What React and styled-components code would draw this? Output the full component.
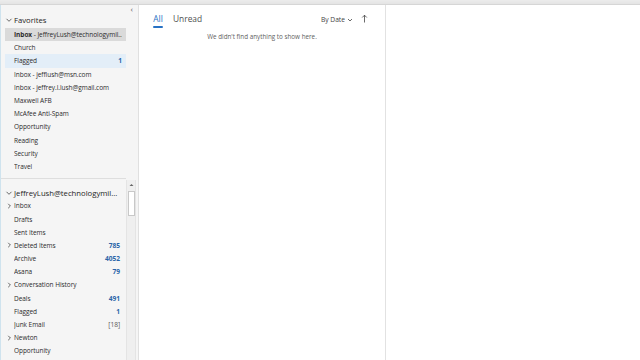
import React from "react";
import styled, { createGlobalStyle } from "styled-components";

const Global = createGlobalStyle`
  html, body { margin: 0; padding: 0; background: #ffffff; }
  body { font-family: "Open Sans", "Noto Sans", "Liberation Sans", sans-serif; color: #242424; }
  * { box-sizing: border-box; }
`;

const Shell = styled.div`
  width: 640px;
  height: 360px;
  display: flex;
  flex-direction: column;
  overflow: hidden;
  background: #fff;
`;

const TopBar = styled.div`
  height: 5px;
  flex: none;
  background: linear-gradient(#ececec, #e4e4e4);
  border-bottom: 1px solid #d6d6d6;
`;

const Main = styled.div`
  flex: 1;
  display: flex;
  min-height: 0;
`;

const Nav = styled.nav`
  width: 139px;
  flex: none;
  background: #f5f5f5;
  border-right: 1px solid #e0e0e0;
  border-left: 1px solid #cfe3ee;
  display: flex;
  flex-direction: column;
  min-height: 0;
`;

const CollapseRow = styled.div`
  height: 7px;
  display: flex;
  justify-content: flex-end;
  align-items: center;
  padding-right: 5px;
  font-size: 8px;
  color: #555;
  line-height: 1;
`;

const SectionHeader = styled.div`
  height: ${p => p.$h || 16}px;
  padding-top: ${p => p.$pt || 0}px;
  display: flex;
  align-items: center;
  padding-left: 4px;
  font-size: 7.7px;
  color: #242424;
  white-space: nowrap;
  gap: 1px;
`;

const Chevron = styled.svg`
  width: 8px;
  height: 8px;
  flex: none;
`;

const Row = styled.div`
  height: 13.2px;
  margin: 0 ${p => (p.$inScroll ? 2 : 12)}px 0 4px;
  display: flex;
  align-items: center;
  padding-left: ${p => (p.$expander ? 2 : 9)}px;
  padding-right: 4px;
  font-size: 6.5px;
  letter-spacing: -0.05px;
  color: #2b2b2b;
  white-space: nowrap;
  background: ${p => (p.$selected ? "#dadada" : p.$hover ? "#e3eef8" : "transparent")};
`;

const RowLabel = styled.span`
  flex: 1;
  overflow: hidden;
`;

const Strong = styled.b`
  font-weight: 700;
`;

const Count = styled.span`
  color: ${p => (p.$muted ? "#555" : "#2a64a8")};
  font-weight: ${p => (p.$muted ? 400 : 700)};
  font-size: 6.6px;
`;

const Divider = styled.div`
  height: 1px;
  background: #dedede;
  margin: 5px 12px 1px 0;
`;

const AccountArea = styled.div`
  flex: 1;
  display: flex;
  min-height: 0;
`;

const AccountList = styled.div`
  flex: 1;
  min-width: 0;
  overflow: hidden;
`;

const Scrollbar = styled.div`
  width: 10px;
  flex: none;
  margin-right: 2px;
  background: #efefef;
  border-left: 1px solid #e4e4e4;
  border-right: 1px solid #e4e4e4;
  display: flex;
  flex-direction: column;
  align-items: center;
  padding-top: 2px;
  gap: 3px;
`;

const ScrollArrow = styled.svg`
  width: 7px;
  height: 6px;
`;

const Thumb = styled.div`
  width: 7px;
  height: 25px;
  background: #ffffff;
  border: 1px solid #c8c8c8;
`;

const Expander = styled.span`
  width: 7px;
  flex: none;
  display: flex;
  align-items: center;
`;

const ListPane = styled.section`
  width: 247px;
  flex: none;
  background: #fff;
  border-right: 1px solid #e2e2e2;
  display: flex;
  flex-direction: column;
`;

const TabBar = styled.div`
  height: 23px;
  display: flex;
  align-items: flex-start;
  padding: 8px 17px 0 14px;
`;

const Tab = styled.div`
  font-size: 8.4px;
  color: ${p => (p.$active ? "#2872c4" : "#505050")};
  margin-right: 10px;
  display: flex;
  flex-direction: column;
  align-items: center;
  gap: 2px;
  &::after {
    content: "";
    width: 10px;
    height: 1.5px;
    background: ${p => (p.$active ? "#2872c4" : "transparent")};
    border-radius: 1px;
  }
`;

const Spacer = styled.div`
  flex: 1;
`;

const SortButton = styled.div`
  font-size: 6.7px;
  color: #444;
  display: flex;
  align-items: center;
  gap: 2px;
  margin-top: 2px;
`;

const ArrowUp = styled.svg`
  width: 7px;
  height: 9px;
  margin-left: 8px;
  margin-top: 1px;
`;

const Empty = styled.div`
  text-align: center;
  font-size: 6.3px;
  color: #5e5e5e;
  margin-top: 4px;
`;

const ReadingPane = styled.section`
  flex: 1;
  background: #fff;
`;

const Down = () => (
  <Chevron viewBox="0 0 8 8">
    <path d="M1.5 2.8 L4 5.3 L6.5 2.8" fill="none" stroke="#444" strokeWidth="0.8" />
  </Chevron>
);

const RightChev = () => (
  <Expander>
    <svg width="5" height="6" viewBox="0 0 5 6">
      <path d="M1.2 0.8 L3.4 3 L1.2 5.2" fill="none" stroke="#444" strokeWidth="0.8" />
    </svg>
  </Expander>
);

const favorites = [
  { label: " - JeffreyLush@technologymil...", strong: "Inbox", selected: true },
  { label: "Church" },
  { label: "Flagged", count: "1", hover: true },
  { label: "Inbox - jefflush@msn.com" },
  { label: "Inbox - jeffrey.l.lush@gmail.com" },
  { label: "Maxwell AFB" },
  { label: "McAfee Anti-Spam" },
  { label: "Opportunity" },
  { label: "Reading" },
  { label: "Security" },
  { label: "Travel" },
];

const folders = [
  { label: "Inbox", expand: true },
  { label: "Drafts" },
  { label: "Sent Items" },
  { label: "Deleted Items", expand: true, count: "785" },
  { label: "Archive", count: "4052" },
  { label: "Asana", count: "79" },
  { label: "Conversation History", expand: true },
  { label: "Deals", count: "491" },
  { label: "Flagged", count: "1" },
  { label: "Junk Email", count: "[18]", muted: true },
  { label: "Newton", expand: true },
  { label: "Opportunity" },
];

export default function App() {
  return (
    <Shell>
      <Global />
      <TopBar />
      <Main>
        <Nav>
          <CollapseRow>‹</CollapseRow>
          <SectionHeader>
            <Down />
            Favorites
          </SectionHeader>
          {favorites.map(f => (
            <Row key={f.label} $selected={f.selected} $hover={f.hover}>
              <RowLabel>
                {f.strong && <Strong>{f.strong}</Strong>}
                {f.label}
              </RowLabel>
              {f.count && <Count>{f.count}</Count>}
            </Row>
          ))}
          <Divider />
          <AccountArea>
            <AccountList>
              <SectionHeader $h={19.2} $pt={6}>
                <Down />
                JeffreyLush@technologymil...
              </SectionHeader>
              {folders.map(f => (
                <Row key={f.label} $inScroll $expander>
                  {f.expand ? <RightChev /> : <Expander />}
                  <RowLabel>{f.label}</RowLabel>
                  {f.count && <Count $muted={f.muted}>{f.count}</Count>}
                </Row>
              ))}
            </AccountList>
            <Scrollbar>
              <ScrollArrow viewBox="0 0 7 6">
                <path d="M1.5 4 L3.5 2 L5.5 4 Z" fill="#666" />
              </ScrollArrow>
              <Thumb />
            </Scrollbar>
          </AccountArea>
        </Nav>
        <ListPane>
          <TabBar>
            <Tab $active>All</Tab>
            <Tab>Unread</Tab>
            <Spacer />
            <SortButton>
              By Date
              <svg width="6" height="6" viewBox="0 0 6 6">
                <path d="M1 2 L3 4 L5 2" fill="none" stroke="#444" strokeWidth="0.8" />
              </svg>
            </SortButton>
            <ArrowUp viewBox="0 0 7 9">
              <path d="M3.5 8.5 V1.2 M1.2 3.5 L3.5 1.2 L5.8 3.5" fill="none" stroke="#444" strokeWidth="0.8" />
            </ArrowUp>
          </TabBar>
          <Empty>We didn't find anything to show here.</Empty>
        </ListPane>
        <ReadingPane />
      </Main>
    </Shell>
  );
}
